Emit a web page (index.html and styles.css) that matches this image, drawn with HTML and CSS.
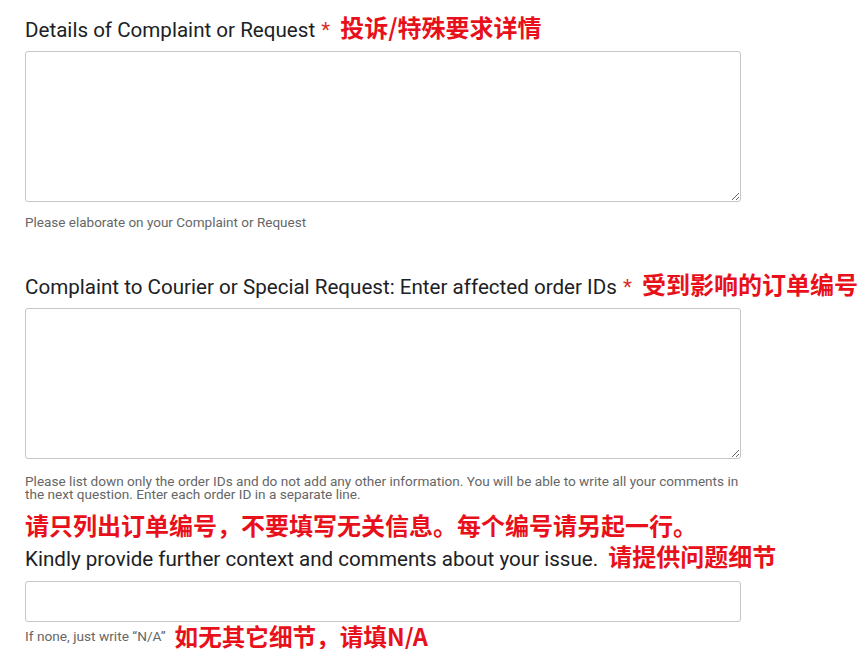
FILE: index.html
```html
<!DOCTYPE html>
<html lang="en">
<head>
    <meta charset="UTF-8">
    <meta name="viewport" content="width=device-width, initial-scale=1.0">
    <title>Complaint or Request</title>
    <link rel="stylesheet" href="styles.css">
</head>
<body>
    <form class="form">
        <!-- 问题一：投诉详情 -->
        <div class="question q-details">
            <label class="q-title">
                Details of Complaint or Request <span class="req">*</span>
                <span class="note">投诉/特殊要求详情</span>
            </label>
            <textarea class="field area"></textarea>
            <p class="hint">Please elaborate on your Complaint or Request</p>
        </div>

        <!-- 问题二：订单编号 -->
        <div class="question q-orders">
            <label class="q-title">
                Complaint to Courier or Special Request: Enter affected order IDs <span class="req">*</span>
                <span class="note">受到影响的订单编号</span>
            </label>
            <textarea class="field area"></textarea>
            <p class="hint">Please list down only the order IDs and do not add any other information. You will be able to write all your comments in the next question. Enter each order ID in a separate line.</p>
            <p class="note note-line">请只列出订单编号，不要填写无关信息。每个编号请另起一行。</p>
        </div>

        <!-- 问题三：补充说明 -->
        <div class="question q-context">
            <label class="q-title">
                Kindly provide further context and comments about your issue.
                <span class="note">请提供问题细节</span>
            </label>
            <input class="field line" type="text">
            <p class="hint">If none, just write “N/A” <span class="note">如无其它细节，请填N/A</span></p>
        </div>
    </form>
</body>
</html>
```

FILE: styles.css
```css
* {
    margin: 0;
    padding: 0;
    box-sizing: border-box;
}
html, body {
    background: #fff;
}
body {
    font-family: Roboto, "Noto Sans", "Noto Sans CJK SC", sans-serif;
    color: #202124;
    -webkit-font-smoothing: antialiased;
}
.form {
    display: flex;
    flex-direction: column;
    width: 864px;
    padding: 15px 0 0 25px;
}
.question {
    display: flex;
    flex-direction: column;
}
.q-title {
    display: block;
    font-size: 20.6px;
    line-height: 28px;
    white-space: nowrap;
}
.req {
    color: #d93025;
    margin-left: 1px;
}
/* 红色中文提示 */
.note {
    font-family: "Noto Sans CJK SC", sans-serif;
    font-weight: 700;
    color: #e8111b;
    font-size: 24px;
    line-height: 1;
    letter-spacing: 0;
    margin-left: 5px;
}
.field {
    display: block;
    width: 716px;
    border: 1px solid #c6c6c6;
    border-radius: 3px;
    background: #fff;
    font: inherit;
    outline: none;
}
.area {
    height: 151px;
    margin-top: 7px;
    resize: vertical;
}
.line {
    height: 41px;
    margin-top: 8px;
}
.hint {
    font-size: 13.5px;
    line-height: 13px;
    color: #666;
    margin-top: 14px;
}
.q-orders {
    margin-top: 43px;
}
.q-orders .hint {
    font-size: 13.6px;
    margin-top: 16px;
    width: 716px;
}
.note-line {
    display: block;
    margin: 9px 0 0;
    line-height: 30px;
}
.q-context .q-title {
    margin-top: 4px;
}
.q-context .hint {
    display: flex;
    align-items: center;
    font-size: 13.7px;
    margin-top: 3px;
}
.q-context .hint .note {
    font-size: 23.6px;
    margin-left: 9px;
}
```
